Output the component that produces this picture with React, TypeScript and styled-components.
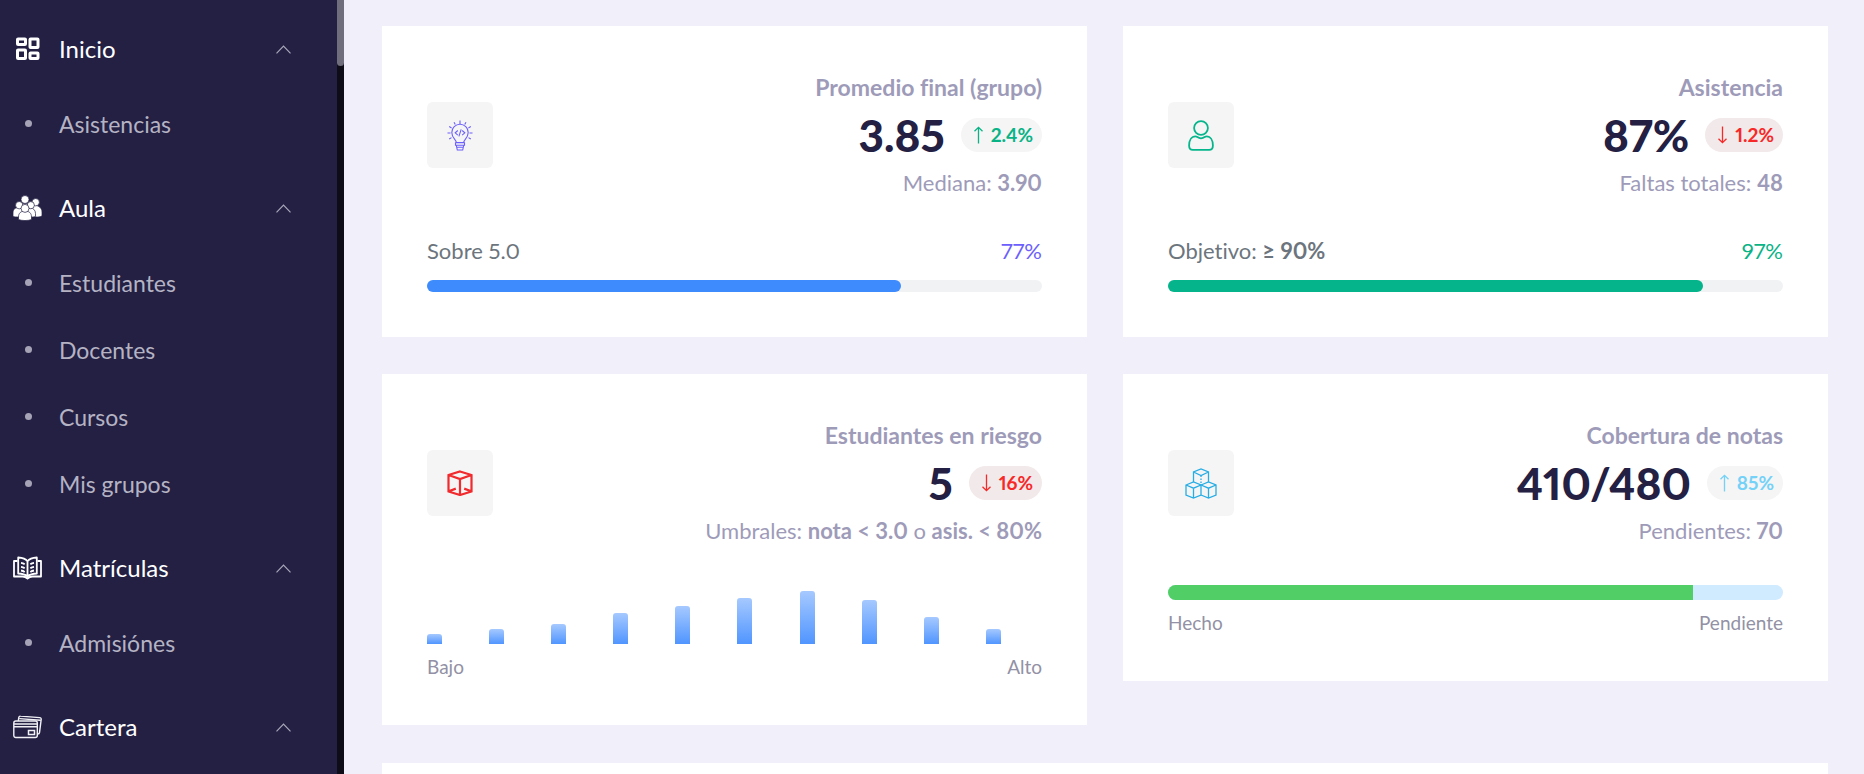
import React from "react";
import styled, { createGlobalStyle } from "styled-components";

const GlobalStyle = createGlobalStyle`
  *, *::before, *::after { box-sizing: border-box; }
  body {
    margin: 0;
    background: #f1f0fa;
    color: #6c757d;
    font-family: Lato, "Open Sans", sans-serif;
    font-size: 22px;
    font-variant-ligatures: none;
    font-variant-numeric: proportional-nums;
    line-height: 32px;
  }
  ul { list-style: none; margin: 0; padding: 0; }
  p, h2 { margin: 0; font: inherit; }
`;

const Layout = styled.div`
  display: flex;
  height: 100vh;
  overflow: hidden;
`;

const Sidebar = styled.aside`
  display: flex;
  flex: none;
  width: 344px;
  background: #232044;
`;

const Nav = styled.nav`
  flex: 1;
  display: flex;
  flex-direction: column;
  gap: 10px;
  padding-top: 8px;
  overflow: hidden;
  font-size: 24px;
`;

const ScrollTrack = styled.div`
  width: 7px;
  background: #0d0c17;
`;

const ScrollThumb = styled.div`
  height: 66px;
  border-radius: 0 0 4px 4px;
  background: #706d7d;
`;

const GroupButton = styled.button`
  display: flex;
  align-items: center;
  gap: 17px;
  width: 100%;
  height: 82px;
  padding: 0 46px 0 13px;
  border: 0;
  background: none;
  color: #fff;
  font: inherit;
  text-align: left;
  cursor: pointer;
`;

const GroupLabel = styled.span`
  flex: 1;
`;

const NavLink = styled.a`
  display: flex;
  align-items: center;
  gap: 27px;
  height: 67px;
  padding-left: 25px;
  color: #b5b3c3;
  font-size: 23px;
  text-decoration: none;

  &::before {
    content: "";
    width: 7px;
    height: 7px;
    border-radius: 50%;
    background: #a5a3b5;
  }
`;

const Main = styled.main`
  flex: 1;
  min-width: 0;
  display: flex;
  flex-direction: column;
  gap: 38px;
  padding: 26px 36px 0 38px;
`;

const CardGrid = styled.div`
  display: grid;
  grid-template-columns: 1fr 1fr;
  align-items: start;
  gap: 37px 36px;
`;

const Card = styled.section`
  padding: 45px;
  background: #fff;
`;

const EmptyCard = styled.section`
  flex: 1 0 45px;
  background: #fff;
`;

const CardHead = styled.div`
  display: flex;
  align-items: center;
  justify-content: space-between;
  color: #9e9bb9;
`;

const IconTile = styled.div<{ $color: string }>`
  display: flex;
  align-items: center;
  justify-content: center;
  width: 66px;
  height: 66px;
  border-radius: 6px;
  background: #f5f5f5;
  color: ${(p) => p.$color};
`;

const Stats = styled.div`
  text-align: right;
`;

const Title = styled.h2`
  font-size: 23px;
  font-weight: 700;
`;

const ValueRow = styled.div`
  display: flex;
  align-items: center;
  justify-content: flex-end;
  gap: 16px;
  height: 64px;
`;

const Value = styled.span`
  color: #232044;
  font-size: 44px;
  font-weight: 900;
`;

const Pill = styled.span<{ $color: string; $bg: string }>`
  display: flex;
  align-items: center;
  gap: 8px;
  height: 34px;
  padding: 0 9px 0 13px;
  border-radius: 17px;
  background: ${(p) => p.$bg};
  color: ${(p) => p.$color};
  font-size: 19px;
  font-weight: 700;
`;

const GoalRow = styled.div<{ $color: string }>`
  display: flex;
  justify-content: space-between;
  margin: 36px 0 13px;

  output { color: ${(p) => p.$color}; }
`;

const Track = styled.div`
  height: 12px;
  border-radius: 6px;
  background: #f1f2f4;
`;

const Fill = styled.div<{ $color: string }>`
  height: 100%;
  border-radius: 6px;
  background: ${(p) => p.$color};
`;

const StackedTrack = styled.div`
  height: 15px;
  margin-top: 38px;
  border-radius: 8px;
  overflow: hidden;
  background: #d0eaff;
`;

const StackedFill = styled.div`
  height: 100%;
  background: #51cf66;
`;

const Bars = styled.div`
  display: grid;
  grid-template-columns: repeat(10, 1fr);
  align-items: end;
  gap: 6px;
  height: 63px;
  margin-top: 34px;
`;

const Bar = styled.div`
  width: 15px;
  border-radius: 3px 3px 0 0;
  background: linear-gradient(180deg, #a6c9ff, #5095ff);
`;

const Legend = styled.div`
  display: flex;
  justify-content: space-between;
  margin-top: 10px;
  color: #9291a5;
  font-size: 19px;
  line-height: 26px;
`;

const Chevron = () => (
  <svg width="15" height="9" viewBox="0 0 15 9" fill="none" stroke="#a9a7b8" strokeWidth="1.2">
    <path d="M.5 8.3 7.5 1l7 7.3" />
  </svg>
);

const Arrow = ({ down }: { down?: boolean }) => (
  <svg width="9" height="18" viewBox="0 0 9 18" fill="none" stroke="currentColor" strokeWidth="1.3">
    <path d={down ? "M4.5 .5v16M.5 12.7l4 4 4-4" : "M4.5 17.5v-16M.5 5.3l4-4 4 4"} />
  </svg>
);

const DashboardIcon = () => (
  <svg width="29" height="26" viewBox="0 0 29 26" fill="none" stroke="#fff" strokeWidth="3">
    <rect x="4.500" y="3" width="8" height="5.500" rx=".6" />
    <rect x="17" y="3" width="8" height="8.500" rx=".6" />
    <rect x="4.500" y="14" width="8" height="8.500" rx=".6" />
    <rect x="17" y="17" width="8" height="5.500" rx=".6" />
  </svg>
);

const PeopleIcon = () => (
  <svg width="29" height="26" viewBox="0 0 29 26" fill="#fff" stroke="#232044" strokeWidth=".7">
    <path d="M8 18V13.5C8 10 10 8.500 12 8.500S16 10 16 13.500V18Z" />
    <circle cx="12" cy="4.500" r="4" />
    <path d="M17.500 22v-5c0-4 2-6.500 5-6.500s6.500 2.500 6.500 6.500v4c-2 1-4 1-6 1Z" />
    <circle cx="22.700" cy="7.200" r="3.700" />
    <path d="M0 21.500V18c0-4 2.500-5.500 5.500-5.500S11 14 11 18v4H6C3.500 22 1.500 22 0 21.500Z" />
    <circle cx="6.200" cy="10.200" r="3.700" />
    <path d="M13 22v-4c0-3.500 2-5 4.500-5s5 2 5 5.500v3C20 22 17 22.500 13 22Z" />
    <circle cx="17.800" cy="10.200" r="3.600" />
    <path d="M5.500 24.500V22c0-4 2.500-6 6.500-6s6.500 2 6.500 6v2.500c-3.500 1.400-9.500 1.400-13 0Z" />
    <circle cx="12" cy="13.400" r="4" />
  </svg>
);

const BookIcon = () => (
  <svg width="29" height="26" viewBox="0 0 29 26" fill="none" stroke="#fff" strokeWidth="1.800" strokeLinejoin="round">
    <path d="M14.500 6.200C12.500 3.500 9 2.700 5.200 2.500v16c4 .1 7 1 9.300 3 2.300-2 5.300-2.900 9.300-3v-16c-3.800.2-7.300 1-9.300 3.700Zm0 0v15.300" />
    <path d="M4.500 6H1v15.500h8.500c2 0 3.500.5 5 2 1.500-1.500 3-2 5-2H28V6h-3.500" />
    <path d="M8 7.800c1.500.2 2.700.7 3.700 1.400M8 11.800c1.500.2 2.700.7 3.700 1.400M8 15.500c1.500.2 2.700.7 3.700 1.400M21 7.800c-1.500.2-2.700.7-3.700 1.400M21 11.800c-1.500.2-2.700.7-3.700 1.400M21 15.500c-1.500.2-2.700.7-3.700 1.400" />
  </svg>
);

const CardsIcon = () => (
  <svg width="29" height="26" viewBox="0 0 29 26" fill="none" stroke="#f1f0f5" strokeWidth="1.400">
    <rect x=".8" y="7" width="23.500" height="16.500" rx="2" />
    <path d="M1 10h23M1 12.700h23" />
    <path d="M5.300 6.800 5.800 3.400C6 2.400 6.600 2 7.500 2.100L26.700 3.600c1 .1 1.600.8 1.500 1.700l-1.700 13.300c-.1.900-.8 1.500-2 1.400M6.500 4.600l20.800 1.600" />
    <rect x="15.500" y="16.500" width="6" height="4" strokeWidth="1.500" />
  </svg>
);

const BulbIcon = () => (
  <svg width="26" height="31" viewBox="0 0 26 31" fill="none" stroke="currentColor" strokeWidth="1.100">
    <path d="M9.300 22.500c0-3-4.500-4.500-4.500-10a8.200 8.200 0 0 1 16.400 0c0 5.500-4.500 7-4.500 10Z" />
    <path d="M8.500 22.700h9v2.600h-9zM9.300 25.500l1 4.500h5.400l1-4.500M9.500 27.300h7" />
    <path d="M13 .5V4M7 2.300l1.300 2.200M19 2.300l-1.300 2.200M2.200 6.600l2.400 1.300M23.800 6.600l-2.400 1.300M.5 13H3.500M22.500 13h3M2.200 19l2.300-1.400M23.800 19l-2.300-1.400" />
    <path d="m10.800 10.500-2.600 2.300 2.600 2.300M15.200 10.500l2.600 2.300-2.600 2.300M14.200 9.300l-2.300 7" />
  </svg>
);

const UserIcon = () => (
  <svg width="26" height="31" viewBox="0 0 26 31" fill="none" stroke="currentColor" strokeWidth="1.800">
    <circle cx="13" cy="8" r="6.900" />
    <path d="M7.500 16.300c-4 0-6.400 4-6.400 9.200 0 3 1.200 4.400 3.700 4.400h16.400c2.500 0 3.700-1.400 3.700-4.400 0-5.200-2.400-9.200-6.400-9.200-1.700 0-2.300 2-5.500 2s-3.800-2-5.500-2Z" />
  </svg>
);

const CubeIcon = () => (
  <svg width="26" height="26" viewBox="0 0 26 26" fill="none" stroke="currentColor" strokeWidth="2.200">
    <path d="M13 1.500 24.500 5v16.500L13 25 1.500 21.500V5ZM1.500 5 13 9l11.500-4M13 9v16M1.800 21.300l7-2.700M24.200 21.300l-7-2.700" />
  </svg>
);

const CubesIcon = () => (
  <svg width="32" height="31" viewBox="0 0 32 31" fill="none" stroke="currentColor" strokeWidth="1.300">
    <path d="M8.500 14V4l7.500-3 7.500 3v10M8.500 4 16 7.500 23.500 4" />
    <path d="M16 7.500V17" strokeDasharray="1.500 1.500" />
    <path d="m1 17 7.500-3 7.500 3v10l-7.500 3L1 27ZM1 17l7.500 3.200L16 17M8.500 20.200V30" />
    <path d="m16 17 7.500-3 7.500 3v10l-7.500 3-7.500-3M16 17l7.500 3.200L31 17M23.500 20.200V30" />
  </svg>
);

const menu = [
  { label: "Inicio", icon: <DashboardIcon />, items: ["Asistencias"] },
  { label: "Aula", icon: <PeopleIcon />, items: ["Estudiantes", "Docentes", "Cursos", "Mis grupos"] },
  { label: "Matrículas", icon: <BookIcon />, items: ["Admisiónes"] },
  { label: "Cartera", icon: <CardsIcon />, items: [] },
];

const riskHistogram = [10, 15, 20, 31, 38, 46, 53, 44, 27, 15];

type HeadProps = {
  icon: React.ReactNode;
  color: string;
  title: string;
  value: string;
  change: string;
  down?: boolean;
  pillColor: string;
  children: React.ReactNode;
};

const StatHead = ({ icon, color, title, value, change, down, pillColor, children }: HeadProps) => (
  <CardHead>
    <IconTile $color={color}>{icon}</IconTile>
    <Stats>
      <Title>{title}</Title>
      <ValueRow>
        <Value>{value}</Value>
        <Pill $color={pillColor} $bg={down ? "#f2e9ea" : "#f5f5f5"}>
          <Arrow down={down} />
          {change}
        </Pill>
      </ValueRow>
      <p>{children}</p>
    </Stats>
  </CardHead>
);

const Progress = ({ value, color }: { value: number; color: string }) => (
  <Track role="progressbar" aria-valuenow={value} aria-valuemin={0} aria-valuemax={100}>
    <Fill $color={color} style={{ width: `${value}%` }} />
  </Track>
);

export default function App() {
  return (
    <Layout>
      <GlobalStyle />
      <Sidebar>
        <Nav>
          {menu.map((group) => (
            <div key={group.label}>
              <GroupButton type="button" aria-expanded="true">
                {group.icon}
                <GroupLabel>{group.label}</GroupLabel>
                <Chevron />
              </GroupButton>
              <ul>
                {group.items.map((item) => (
                  <li key={item}>
                    <NavLink href="#">{item}</NavLink>
                  </li>
                ))}
              </ul>
            </div>
          ))}
        </Nav>
        <ScrollTrack>
          <ScrollThumb />
        </ScrollTrack>
      </Sidebar>
      <Main>
        <CardGrid>
          <Card>
            <StatHead icon={<BulbIcon />} color="#6c5ffc" title="Promedio final (grupo)" value="3.85" change="2.4%" pillColor="#09b386">
              Mediana: <b>3.90</b>
            </StatHead>
            <GoalRow $color="#6c5ffc">
              <span>Sobre 5.0</span>
              <output>77%</output>
            </GoalRow>
            <Progress value={77} color="#3d8bfd" />
          </Card>
          <Card>
            <StatHead icon={<UserIcon />} color="#05b58b" title="Asistencia" value="87%" change="1.2%" down pillColor="#f72828">
              Faltas totales: <b>48</b>
            </StatHead>
            <GoalRow $color="#09b386">
              <span>
                Objetivo: <b>≥ 90%</b>
              </span>
              <output>97%</output>
            </GoalRow>
            <Progress value={87} color="#05b48a" />
          </Card>
          <Card>
            <StatHead icon={<CubeIcon />} color="#f02a2d" title="Estudiantes en riesgo" value="5" change="16%" down pillColor="#f72828">
              Umbrales: <b>nota &lt; 3.0</b> o <b>asis. &lt; 80%</b>
            </StatHead>
            <Bars>
              {riskHistogram.map((height, i) => (
                <Bar key={i} style={{ height }} />
              ))}
            </Bars>
            <Legend>
              <span>Bajo</span>
              <span>Alto</span>
            </Legend>
          </Card>
          <Card>
            <StatHead icon={<CubesIcon />} color="#27ade4" title="Cobertura de notas" value="410/480" change="85%" pillColor="#74d1f8">
              Pendientes: <b>70</b>
            </StatHead>
            <StackedTrack role="progressbar" aria-valuenow={410} aria-valuemin={0} aria-valuemax={480}>
              <StackedFill style={{ width: `${(410 / 480) * 100}%` }} />
            </StackedTrack>
            <Legend>
              <span>Hecho</span>
              <span>Pendiente</span>
            </Legend>
          </Card>
        </CardGrid>
        <EmptyCard />
      </Main>
    </Layout>
  );
}
